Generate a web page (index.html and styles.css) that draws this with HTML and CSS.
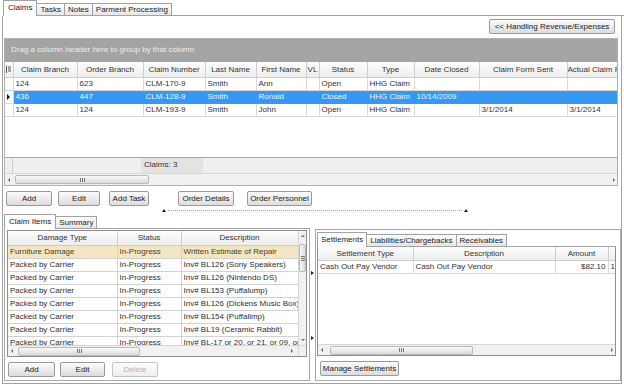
FILE: index.html
```html
<!DOCTYPE html>
<html lang="en">

<head>
    <meta charset="UTF-8">
    <title>Claims</title>
    <link rel="stylesheet" href="styles.css">
</head>

<body>
    <div class="app">
        <div class="tabstrip top-tabs">
            <div class="tab active">Claims</div>
            <div class="tab">Tasks</div>
            <div class="tab">Notes</div>
            <div class="tab">Parment Processing</div>
            <div class="tab-fill"></div>
        </div>

        <div class="panel">
            <div class="toolbar">
                <button class="btn btn-handling">&lt;&lt; Handling Revenue/Expenses</button>
            </div>

            <div class="claims-grid">
                <div class="group-bar">Drag a column header here to group by that column</div>
                <div class="claims-body">
                    <table class="grid-table claims-table">
                        <colgroup>
                            <col class="w8"><col class="w64"><col class="w66"><col class="w62"><col class="w51">
                            <col class="w50"><col class="w13"><col class="w48"><col class="w47"><col class="w65">
                            <col class="w88"><col class="w70">
                        </colgroup>
                        <thead>
                            <tr>
                                <th class="ind">
                                    <svg width="5" height="7" viewBox="0 0 5 7"><path d="M0.5 0v7M2 1h3M2 3h3M2 5h3" stroke="#555" stroke-width="1"/></svg>
                                </th>
                                <th>Claim Branch</th>
                                <th>Order Branch</th>
                                <th>Claim Number</th>
                                <th>Last Name</th>
                                <th>First Name</th>
                                <th>VL</th>
                                <th>Status</th>
                                <th>Type</th>
                                <th>Date Closed</th>
                                <th>Claim Form Sent</th>
                                <th>Actual Claim Received</th>
                            </tr>
                        </thead>
                        <tbody>
                            <tr>
                                <td class="ind"></td><td>124</td><td>623</td><td>CLM-170-9</td><td>Smith</td>
                                <td>Ann</td><td></td><td>Open</td><td>HHG Claim</td><td></td><td></td><td></td>
                            </tr>
                            <tr class="selected">
                                <td class="ind"><span class="row-arrow"></span></td><td>436</td><td>447</td><td>CLM-128-9</td><td>Smith</td>
                                <td>Ronald</td><td></td><td>Closed</td><td>HHG Claim</td><td>10/14/2009</td><td></td><td></td>
                            </tr>
                            <tr>
                                <td class="ind"></td><td>124</td><td>124</td><td>CLM-193-9</td><td>Smith</td>
                                <td>John</td><td></td><td>Open</td><td>HHG Claim</td><td></td><td>3/1/2014</td><td>3/1/2014</td>
                            </tr>
                        </tbody>
                    </table>
                </div>
                <div class="claims-footer">
                    <div class="f-ind"></div>
                    <div class="f-gap"></div>
                    <div class="f-count">Claims: 3</div>
                </div>
                <div class="hscroll main-scroll">
                    <span class="arr arr-l"></span>
                    <div class="thumb thumb-main"><span class="grip"></span></div>
                    <div class="track"></div>
                    <span class="arr arr-r"></span>
                </div>
            </div>

            <div class="btn-row">
                <button class="btn b-add">Add</button>
                <button class="btn b-edit">Edit</button>
                <button class="btn b-task">Add Task</button>
                <button class="btn b-details">Order Details</button>
                <button class="btn b-personnel">Order Personnel</button>
            </div>

            <div class="h-splitter">
                <span class="up"></span>
                <span class="dots"></span>
                <span class="up"></span>
            </div>

            <div class="lower">
                <div class="left-col">
                    <div class="tabstrip sub-tabs">
                        <div class="tab active">Claim Items</div>
                        <div class="tab">Summary</div>
                        <div class="tab-fill"></div>
                    </div>
                    <div class="sub-box">
                        <div class="items-grid">
                            <div class="items-body">
                                <table class="grid-table items-table">
                                    <colgroup>
                                        <col class="w109"><col class="w64"><col class="w117">
                                    </colgroup>
                                    <thead>
                                        <tr><th>Damage Type</th><th>Status</th><th>Description</th></tr>
                                    </thead>
                                    <tbody>
                                        <tr class="current"><td>Furniture Damage</td><td>In-Progress</td><td>Written Estimate of Repair</td></tr>
                                        <tr><td>Packed by Carrier</td><td>In-Progress</td><td>Inv# BL126 (Sony Speakers)</td></tr>
                                        <tr><td>Packed by Carrier</td><td>In-Progress</td><td>Inv# BL126 (Nintendo DS)</td></tr>
                                        <tr><td>Packed by Carrier</td><td>In-Progress</td><td>Inv# BL153 (Puffalump)</td></tr>
                                        <tr><td>Packed by Carrier</td><td>In-Progress</td><td>Inv# BL126 (Dickens Music Box)</td></tr>
                                        <tr><td>Packed by Carrier</td><td>In-Progress</td><td>Inv# BL154 (Puffalimp)</td></tr>
                                        <tr><td>Packed by Carrier</td><td>In-Progress</td><td>Inv# BL19 (Ceramic Rabbit)</td></tr>
                                        <tr><td>Packed by Carrier</td><td>In-Progress</td><td>Inv# BL-17 or 20, or 21, or 09, or 05</td></tr>
                                    </tbody>
                                </table>
                            </div>
                            <div class="vscroll">
                                <span class="arr arr-u"></span>
                                <div class="vthumb"><span class="vgrip"></span></div>
                                <div class="vtrack"></div>
                                <span class="arr arr-d"></span>
                            </div>
                            <div class="hscroll items-scroll">
                                <span class="arr arr-l"></span>
                                <div class="thumb thumb-items"><span class="grip"></span></div>
                                <div class="track"></div>
                                <span class="arr arr-r"></span>
                            </div>
                            <div class="corner"></div>
                        </div>
                        <div class="btn-row sub-btns">
                            <button class="btn s-add">Add</button>
                            <button class="btn s-edit">Edit</button>
                            <button class="btn s-delete" disabled>Delete</button>
                        </div>
                    </div>
                </div>

                <div class="v-splitter">
                    <span class="rt rt-top"></span>
                    <span class="rt rt-bottom"></span>
                </div>

                <div class="right-box">
                    <div class="tabstrip settle-tabs">
                        <div class="tab active">Settlements</div>
                        <div class="tab">Liabilities/Chargebacks</div>
                        <div class="tab">Receivables</div>
                        <div class="tab-fill"></div>
                    </div>
                    <div class="settle-grid">
                        <div class="settle-body">
                            <table class="grid-table settle-table">
                                <colgroup>
                                    <col class="w95"><col class="w142"><col class="w53"><col class="w20">
                                </colgroup>
                                <thead>
                                    <tr><th>Settlement Type</th><th>Description</th><th>Amount</th><th></th></tr>
                                </thead>
                                <tbody>
                                    <tr><td>Cash Out Pay Vendor</td><td>Cash Out Pay Vendor</td><td class="num">$82.10</td><td>10/1</td></tr>
                                </tbody>
                            </table>
                        </div>
                        <div class="hscroll settle-scroll">
                            <span class="arr arr-l"></span>
                            <div class="thumb thumb-settle"><span class="grip"></span></div>
                            <div class="track"></div>
                            <span class="arr arr-r"></span>
                        </div>
                    </div>
                    <button class="btn b-manage">Manage Settlements</button>
                </div>
            </div>
        </div>
    </div>
</body>

</html>
```

FILE: styles.css
```css
* {
    box-sizing: border-box;
}

body {
    margin: 0;
    width: 624px;
    height: 385px;
    overflow: hidden;
    background: #fff;
    font-family: "Liberation Sans", Arial, sans-serif;
    font-size: 8px;
    color: #333;
}

.app {
    padding-left: 2px;
}

/* tabs */

.tabstrip {
    display: flex;
    align-items: flex-end;
}

.top-tabs {
    height: 16px;
    padding-left: 1px;
}

.tab {
    height: 13px;
    line-height: 11px;
    padding: 0 3px;
    border: 1px solid #a2a2a2;
    border-left: none;
    background: linear-gradient(#fefefe, #e6e6e6);
    color: #222;
    white-space: nowrap;
}

.tab.active {
    height: 16px;
    line-height: 14px;
    padding: 0 4px;
    border-left: 1px solid #a2a2a2;
    border-bottom: none;
    background: #fff;
}

.tab-fill {
    flex: 1;
    border-bottom: 1px solid #a2a2a2;
}

.panel {
    width: 620px;
    height: 368px;
    border: 1px solid #a2a2a2;
    border-top: none;
    padding: 0 3px 0 1px;
}

/* buttons */

.btn {
    display: flex;
    align-items: center;
    justify-content: center;
    height: 15px;
    padding: 0;
    border: 1px solid #9a9a9a;
    border-radius: 2px;
    background: linear-gradient(#fcfcfc, #dcdcdc);
    font-family: inherit;
    font-size: 8px;
    color: #222;
    white-space: nowrap;
}

.btn:disabled {
    border-color: #c4c4c4;
    background: linear-gradient(#fdfdfd, #eeeeee);
    color: #b4b4b4;
}

.toolbar {
    height: 22px;
    display: flex;
    justify-content: flex-end;
    padding-top: 3px;
    padding-right: 3px;
}

.btn-handling {
    width: 126px;
}

.btn-row {
    display: flex;
    margin-top: 5px;
    height: 15px;
}

.b-add { width: 46px; margin-left: 2px; }
.b-edit { width: 42px; margin-left: 6px; }
.b-task { width: 40px; margin-left: 9px; }
.b-details { width: 56px; margin-left: 29px; }
.b-personnel { width: 65px; margin-left: 13px; }

/* main claims grid */

.claims-grid {
    width: 614px;
    height: 148px;
    border: 1px solid #b2b2b2;
}

.group-bar {
    height: 23px;
    line-height: 22px;
    padding-left: 6px;
    background: #a4a4a4;
    color: #ededed;
}

.claims-body {
    height: 95px;
    overflow: hidden;
}

.grid-table {
    border-collapse: collapse;
    table-layout: fixed;
}

.grid-table th {
    padding: 0;
    font-weight: normal;
    color: #333;
    text-align: center;
    white-space: nowrap;
    overflow: hidden;
    background: linear-gradient(#fdfdfd, #ededed);
    border: 1px solid #cdcdcd;
    border-top: none;
}

.grid-table td {
    padding: 0 0 0 2px;
    white-space: nowrap;
    overflow: hidden;
    border: 1px solid #d8d8d8;
}

.grid-table tbody tr {
    height: 13px;
}

.w8 { width: 8px; }
.w13 { width: 13px; }
.w20 { width: 20px; }
.w47 { width: 47px; }
.w48 { width: 48px; }
.w50 { width: 50px; }
.w51 { width: 51px; }
.w53 { width: 53px; }
.w62 { width: 62px; }
.w64 { width: 64px; }
.w65 { width: 65px; }
.w66 { width: 66px; }
.w70 { width: 70px; }
.w88 { width: 88px; }
.w95 { width: 95px; }
.w109 { width: 109px; }
.w117 { width: 117px; }
.w142 { width: 142px; }

.claims-table {
    width: 632px;
}

.claims-table thead tr {
    height: 15px;
}

.claims-table th:first-child,
.claims-table td:first-child {
    border-left: none;
}

.claims-table .ind {
    padding: 0;
    text-align: center;
    line-height: 0;
}

.claims-table tr.selected td {
    background: #3698f0;
    color: #e4f5ff;
    border-color: #3698f0;
}

.claims-table tr.selected td.ind {
    background: #fff;
    border-color: #d8d8d8;
}

.row-arrow {
    display: inline-block;
    border-top: 3px solid transparent;
    border-bottom: 3px solid transparent;
    border-left: 3px solid #111;
}

.claims-footer {
    display: flex;
    height: 16px;
    border-top: 1px solid #a9a9a9;
    background: #efefef;
}

.f-ind {
    width: 8px;
    border-right: 1px solid #cdcdcd;
}

.f-gap {
    width: 128px;
}

.f-count {
    width: 62px;
    padding-left: 3px;
    line-height: 14px;
    background: #e3e3e3;
}

/* scrollbars */

.hscroll {
    display: flex;
    align-items: center;
    height: 12px;
    border-top: 1px solid #d6d6d6;
    background: #f1f1f1;
    padding: 0 2px 0 3px;
}

.arr {
    display: inline-block;
    width: 0;
    height: 0;
    flex: none;
}

.arr-l {
    border-top: 2px solid transparent;
    border-bottom: 2px solid transparent;
    border-right: 2px solid #666;
}

.arr-r {
    border-top: 2px solid transparent;
    border-bottom: 2px solid transparent;
    border-left: 2px solid #666;
}

.arr-u {
    border-left: 2px solid transparent;
    border-right: 2px solid transparent;
    border-bottom: 2px solid #666;
}

.arr-d {
    border-left: 2px solid transparent;
    border-right: 2px solid transparent;
    border-top: 2px solid #666;
}

.thumb {
    display: flex;
    align-items: center;
    justify-content: center;
    height: 9px;
    margin-left: 5px;
    border: 1px solid #b9b9b9;
    border-radius: 2px;
    background: linear-gradient(#fafafa, #dadada);
}

.grip {
    width: 5px;
    height: 4px;
    background: repeating-linear-gradient(90deg, #777 0, #777 1px, transparent 1px, transparent 2px);
}

.track {
    flex: 1;
}

.thumb-main { width: 134px; }

/* splitter */

.h-splitter {
    display: flex;
    align-items: center;
    height: 8px;
    padding-left: 158px;
}

.up {
    display: inline-block;
    border-left: 2px solid transparent;
    border-right: 2px solid transparent;
    border-bottom: 3px solid #222;
}

.dots {
    width: 294px;
    margin: 0 2px;
    border-top: 1px dotted #a8a8a8;
}

/* lower area */

.lower {
    display: flex;
    height: 167px;
    margin-right: -3px;
}

.left-col {
    width: 306px;
    display: flex;
    flex-direction: column;
}

.sub-tabs {
    height: 15px;
}

.sub-tabs .tab {
    height: 13px;
}

.sub-tabs .tab.active {
    height: 15px;
    line-height: 13px;
}

.sub-box {
    height: 152px;
    border: 1px solid #a9a9a9;
    border-top: none;
    padding: 1px 2px 0;
}

.items-grid {
    display: grid;
    grid-template-columns: 290px 8px;
    grid-template-rows: 114px 11px;
    width: 300px;
    height: 127px;
    border: 1px solid #8e8e8e;
}

.items-body {
    overflow: hidden;
}

.items-table {
    width: 290px;
}

.items-table thead tr {
    height: 14px;
}

.items-table th:first-child,
.items-table td:first-child {
    border-left: none;
}

.items-table td {
    border-color: #d2d2d2;
    color: #2e2e2e;
}

.items-table tr.current td {
    background: #f4e6c2;
    color: #4a3d1a;
}

.vscroll {
    display: flex;
    flex-direction: column;
    align-items: center;
    background: #f1f1f1;
    border-left: 1px solid #d6d6d6;
    padding: 4px 0 4px;
}

.vthumb {
    display: flex;
    align-items: center;
    justify-content: center;
    width: 7px;
    height: 28px;
    margin-top: 7px;
    border: 1px solid #b9b9b9;
    border-radius: 2px;
    background: linear-gradient(90deg, #fafafa, #dadada);
}

.vgrip {
    width: 4px;
    height: 5px;
    background: repeating-linear-gradient(#777 0, #777 1px, transparent 1px, transparent 2px);
}

.vtrack {
    flex: 1;
}

.items-scroll {
    height: 11px;
    border-top: 1px solid #d6d6d6;
    padding-right: 5px;
}

.thumb-items { width: 122px; }

.corner {
    background: #f1f1f1;
    border-top: 1px solid #d6d6d6;
    border-left: 1px solid #d6d6d6;
}

.sub-btns {
    margin-top: 5px;
}

.s-add { width: 47px; margin-left: 1px; }
.s-edit { width: 45px; margin-left: 5px; }
.s-delete { width: 46px; margin-left: 7px; }

.v-splitter {
    width: 5px;
    display: flex;
    flex-direction: column;
    align-items: center;
}

.rt {
    display: inline-block;
    border-top: 2px solid transparent;
    border-bottom: 2px solid transparent;
    border-left: 3px solid #222;
}

.rt-top { margin-top: 57px; }
.rt-bottom { margin-top: 61px; }

.right-box {
    width: 306px;
    height: 152px;
    margin-top: 15px;
    border: 1px solid #a9a9a9;
    padding: 1px 0 0 1px;
}

.settle-tabs {
    width: 299px;
    height: 16px;
}

.settle-tabs .tab {
    height: 13px;
}

.settle-tabs .tab.active {
    height: 15px;
    line-height: 13px;
    padding: 0 3px;
}

.settle-grid {
    display: flex;
    flex-direction: column;
    width: 299px;
    height: 109px;
    border: 1px solid #8e8e8e;
    border-top: none;
}

.settle-body {
    flex: 1;
    overflow: hidden;
}

.settle-table {
    width: 310px;
}

.settle-table thead tr {
    height: 13px;
}

.settle-table th:first-child,
.settle-table td:first-child {
    border-left: none;
}

.settle-table td.num {
    text-align: right;
    padding-right: 2px;
}

.settle-scroll {
    height: 11px;
    padding-right: 2px;
}

.thumb-settle { width: 143px; margin-left: 7px; }

.b-manage {
    width: 79px;
    margin-top: 5px;
    margin-left: 3px;
}
```
